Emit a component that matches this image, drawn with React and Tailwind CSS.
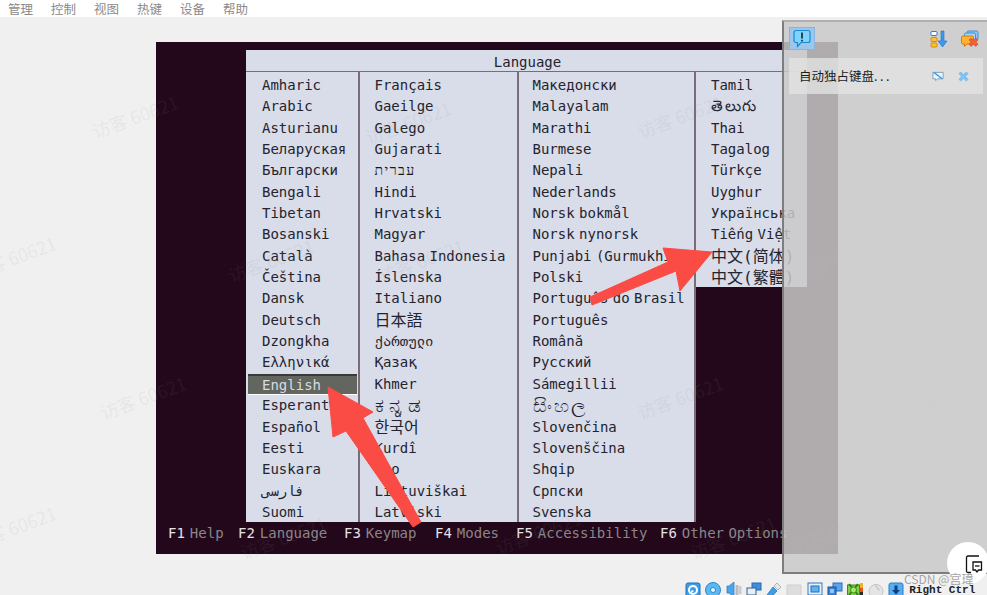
const mono = { fontFamily: '"DejaVu Sans Mono","Noto Sans CJK SC",monospace' };

const c1 = ["Amharic","Arabic","Asturianu","Беларуская","Български","Bengali","Tibetan","Bosanski","Català","Čeština","Dansk","Deutsch","Dzongkha","Ελληνικά","English","Esperanto","Español","Eesti","Euskara","فارسی","Suomi"];
const c2 = ["Français","Gaeilge","Galego","Gujarati","עברית","Hindi","Hrvatski","Magyar","Bahasa Indonesia","Íslenska","Italiano","日本語","ქართული","Қазақ","Khmer","ಕನ್ನಡ","한국어","Kurdî","Lao","Lietuviškai","Latviski"];
const c3 = ["Македонски","Malayalam","Marathi","Burmese","Nepali","Nederlands","Norsk bokmål","Norsk nynorsk","Punjabi (Gurmukhi)","Polski","Português do Brasil","Português","Română","Русский","Sámegillii","සිංහල","Slovenčina","Slovenščina","Shqip","Српски","Svenska"];
const c4 = ["Tamil","తెలుగు","Thai","Tagalog","Türkçe","Uyghur","Українська","Tiếng Việt","中文(简体)","中文(繁體)"];

const rowClass = (s) => {
  if (/[\u4e00-\u9fff\uac00-\ud7af]/.test(s)) return "h-[21.35px] leading-[21.35px] whitespace-nowrap text-[16px]";
  if (s === "ಕನ್ನಡ") return "h-[21.35px] leading-[21.35px] whitespace-nowrap text-[20px] tracking-[5px] overflow-hidden";
  if (s === "తెలుగు") return "h-[21.35px] leading-[21.35px] whitespace-nowrap text-[15px] tracking-[1.500px]";
  if (s === "සිංහල") return "h-[21.35px] leading-[21.35px] whitespace-nowrap text-[19px] tracking-[2px] overflow-hidden";
  if (s === "עברית") return "h-[21.35px] leading-[21.35px] whitespace-nowrap tracking-[1.500px] text-[#16161e]";
  return "h-[21.35px] leading-[21.35px] whitespace-nowrap";
};

function Row({ t, selected, pad }) {
  if (selected) {
    return (
      <div className="h-[21.35px] leading-[18px] bg-[#62665f] text-[#d8dbe3] border-t-2 border-[#3a3a3a] border-b border-b-white ml-[2px] mr-[1px] whitespace-nowrap" style={{ paddingLeft: pad - 2 }}>
        {t}
      </div>
    );
  }
  return <div className={rowClass(t)} style={{ paddingLeft: pad }}>{t}</div>;
}

function Col({ items, w, pad, border, h }) {
  return (
    <div className={border ? "shrink-0 pt-[3px] border-r-2 border-[#7a6c78] overflow-hidden" : "shrink-0 pt-[3px] overflow-hidden"} style={{ width: w, height: h }}>
      {items.map((t) => <Row key={t} t={t} pad={pad} selected={t === "English"} />)}
    </div>
  );
}

const F = ({ k, label, w }) => (
  <div className="shrink-0 whitespace-nowrap" style={{ width: w }}>
    <span className="text-[#e6e2e4]">{k}</span>
    <span className="text-[#8d8489] ml-[5px]">{label}</span>
  </div>
);

const marks = [
  [90, 104], [635, 104], [-32, 245], [226, 248], [98, 385], [635, 385], [-32, 515], [903, 115],
  [793, 245], [903, 385], [363, 110], [493, 520], [238, 525], [688, 525], [376, 248], [788, 520],
];

function BlueBubble() {
  return (
    <svg width="18" height="19" viewBox="0 0 18 19">
      <path d="M3 1.500h12a2 2 0 0 1 2 2v8a2 2 0 0 1-2 2H8l-3.500 4v-4H3a2 2 0 0 1-2-2v-8a2 2 0 0 1 2-2z" fill="#7fd4fb" stroke="#1789d6" strokeWidth="1.200" />
      <rect x="8.200" y="3.500" width="1.600" height="6" fill="#123" />
      <rect x="8.200" y="10.800" width="1.600" height="1.600" fill="#123" />
    </svg>
  );
}

function SortIcon() {
  return (
    <svg width="18" height="18" viewBox="0 0 18 18">
      <rect x="1" y="1.500" width="6" height="4" rx="1" fill="#fff" stroke="#2a7ad0" />
      <rect x="1" y="7.500" width="6" height="4" rx="1" fill="#ffc02e" stroke="#d98a10" />
      <rect x="1" y="13" width="6" height="4" rx="1" fill="#ffc02e" stroke="#d98a10" />
      <path d="M11 1h3v10h3l-4.500 6L8 11h3z" fill="#3a9bf0" stroke="#1c6cc4" strokeWidth=".6" />
    </svg>
  );
}

function CloseAll() {
  return (
    <svg width="18" height="18" viewBox="0 0 18 18">
      <rect x="6" y="1" width="11" height="9" rx="1.500" fill="#8cc8f4" stroke="#3c8ed8" />
      <rect x="3.500" y="3" width="11" height="9" rx="1.500" fill="#a5d6f7" stroke="#3c8ed8" />
      <path d="M2 6h9a1.500 1.500 0 0 1 1.500 1.500v5A1.500 1.500 0 0 1 11 14H6l-2.500 2.500V14H2a1.500 1.500 0 0 1-1.500-1.500v-5A1.500 1.500 0 0 1 2 6z" fill="#ffb52e" stroke="#cf7d10" />
      <path d="M10 8l2.500 2 2.500-2 2 2-2 2 2 2-2 2.500-2.500-2-2.500 2-2-2.500 2-2-2-2z" fill="#f0603a" stroke="#c73e20" strokeWidth=".5" />
    </svg>
  );
}

function Sm({ children }) {
  return <svg width="16" height="16" viewBox="0 0 16 16" className="shrink-0">{children}</svg>;
}

const status = [
  <Sm key="0"><rect x="1" y="1" width="14" height="14" rx="2" fill="#3b9fe8" stroke="#1c6fc0" /><circle cx="8" cy="8" r="4" fill="none" stroke="#fff" strokeWidth="2" /><path d="M4 13l3-5 2 1z" fill="#fff" /></Sm>,
  <Sm key="1"><circle cx="8" cy="8" r="7.500" fill="#5cb8f2" stroke="#2c86d0" /><circle cx="8" cy="8" r="2.500" fill="#e8f6ff" stroke="#2c86d0" /></Sm>,
  <Sm key="2"><path d="M1 4h2l5-4v15l-5-4H1z" fill="#4aa6ea" stroke="#1f76c4" strokeWidth=".7" /><rect x="9.500" y="3" width="3" height="10" fill="#b8bcc0" /><rect x="13" y="4" width="2.500" height="8" fill="#c8ccd0" /></Sm>,
  <Sm key="3"><rect x="6" y="1" width="9" height="7" fill="#3f8fe0" stroke="#2767ad" /><rect x="1" y="6" width="9" height="7" fill="#e6eef6" stroke="#3d5d80" /><rect x="3" y="14" width="5" height="1.500" fill="#556" /></Sm>,
  <Sm key="4"><path d="M1 13l6-8 4 4-6 6.500z" fill="#3b9fe8" stroke="#1c6fc0" strokeWidth=".7" /><path d="M8 4l3-3 4 4-3 3z" fill="#e8e8e8" stroke="#999" strokeWidth=".7" /></Sm>,
  <Sm key="5"><path d="M1 3h9l5 0v12H1z" fill="#dddddd" stroke="#cfcfcf" /></Sm>,
  <Sm key="6"><rect x="1" y="1" width="14" height="12" fill="#e6eef6" stroke="#3578bd" /><rect x="4" y="4" width="8" height="6" fill="#5fb2ee" stroke="#1f6fc0" /><rect x="3" y="14" width="10" height="1.500" fill="#7b8a99" /></Sm>,
  <Sm key="7"><rect x="6" y="1" width="9" height="8" fill="#5aa5ea" stroke="#2a6dbb" /><rect x="1" y="5" width="8" height="10" fill="#3b7fd0" stroke="#234f8f" /><rect x="3" y="7" width="4" height="4" fill="#8cc6f5" /></Sm>,
  <Sm key="8"><rect x="0.500" y="3" width="12" height="11" fill="#7fd04a" stroke="#3e8a1f" /><path d="M2 2l9 11M11 2L2 13" stroke="#2f7a14" strokeWidth="1.800" /><circle cx="6.500" cy="8" r="3" fill="#a8e86a" stroke="#3e8a1f" /><rect x="13" y="1" width="3" height="5" fill="#f2b21f" /><rect x="13" y="6" width="3" height="4" fill="#e0551a" /><rect x="13" y="10" width="3" height="5" fill="#2a2a2a" /></Sm>,
  <Sm key="9"><ellipse cx="8" cy="9" rx="7" ry="6.500" fill="#e4e4e4" stroke="#c4c4c4" /><path d="M8 3l4 5-1 1-4-5z" fill="#c6c6c6" /></Sm>,
  <Sm key="10"><rect x="1" y="1" width="14" height="14" rx="2" fill="#58aef0" stroke="#2c7fcc" /><path d="M6.500 3.500h3v4.500H12l-4 4.500L4 8h2.500z" fill="#0f3f80" /></Sm>,
];

export default function App() {
  return (
    <div className="relative w-[987px] h-[595px] overflow-hidden bg-[#f0f0f0]" style={{ fontFamily: '"Noto Sans CJK SC",sans-serif' }}>
      <div className="h-[17px] bg-white flex pl-[8px] gap-[18px] text-[12.500px] leading-[17px] text-[#8a8a8a]">
        {["管理","控制","视图","热键","设备","帮助"].map((t) => <span key={t}>{t}</span>)}
      </div>

      <div className="mt-[25px] ml-[156px] w-[682px] h-[512px] bg-[#22081a] pt-[8px] pl-[90px] text-[14px] text-[#24242e] [word-spacing:-4px]" style={mono}>
        <div className="w-[561px] h-[22px] bg-[#d9dce9] border-b border-[#7a6c78] text-center leading-[24px] pl-[2px]">Language</div>
        <div className="flex w-[561px] items-start">
          <div className="flex h-[450px] bg-[#d9dce9]">
            <Col items={c1} w={114} pad={16} border h={450} />
            <Col items={c2} w={158.500} pad={14.500} border h={450} />
            <Col items={c3} w={177.500} pad={14} border h={450} />
          </div>
          <div className="bg-[#d9dce9]">
            <Col items={c4} w={111} pad={15} h={215} />
          </div>
        </div>
        <div className="flex h-[21px] leading-[22px] -ml-[78px]">
          <F k="F1" label="Help" w={70} />
          <F k="F2" label="Language" w={106} />
          <F k="F3" label="Keymap" w={91} />
          <F k="F4" label="Modes" w={81} />
          <F k="F5" label="Accessibility" w={144} />
          <F k="F6" label="Other Options" w={140} />
        </div>
      </div>

      <div className="mt-[27px] flex items-start gap-[4.300px] pl-[685px] h-[16px] pt-[1px]">
        {status}
        <span className="ml-[1px] mt-[1px] text-[11px] leading-[14px] text-[#222] whitespace-nowrap font-bold" style={{ fontFamily: '"Liberation Mono",monospace' }}>Right Ctrl</span>
      </div>

      {/* watermarks */}
      <div className="absolute inset-0 pointer-events-none">
        {marks.map(([x, y], i) => (
          <span key={i} className="absolute text-[18px] leading-[24px] text-[#8a8a8a]/10 whitespace-nowrap -rotate-[20deg]" style={{ left: x, top: y }}>访客 60621</span>
        ))}
      </div>

      {/* red arrows */}
      <svg className="absolute inset-0" width="987" height="595" viewBox="0 0 987 595">
        <polygon points="328,387 373,412 363,418 421,522 413,527 346,431 333,437" fill="#fa4b45" stroke="#fa4b45" strokeLinejoin="round" />
        <polygon points="712,252 680,291 676,271 592,305 590,297 668,262 663,248" fill="#fa4b45" stroke="#fa4b45" strokeLinejoin="round" />
      </svg>

      {/* floating panel */}
      <div className="absolute left-[782px] top-[20px] w-[205px] h-[554px] bg-[#c9c9c9]/[0.85] border-l-2 border-t-2 border-b-2 border-l-[#7d7d7d] border-t-[#b0b0b0] border-b-[#7d7d7d] flex flex-col pl-[5px] pt-[5px]">
        <div className="flex items-center h-[23px]">
          <div className="w-[26px] h-[23px] bg-[#9cc6ea] border border-[#86b6e0] flex items-center justify-center"><BlueBubble /></div>
          <div className="ml-auto flex items-center gap-[13px] pr-[8px]"><SortIcon /><CloseAll /></div>
        </div>
        <div className="mt-[8px] w-[194px] h-[36px] bg-[#e2e2e2]/80 flex items-center pl-[10px] pr-[14px] text-[12.500px] text-[#1c1c1c]">
          <span className="whitespace-nowrap">自动独占键盘<span className="tracking-[2.500px]">...</span></span>
          <div className="ml-auto flex items-center gap-[14px]">
            <svg width="12" height="11" viewBox="0 0 13 11"><path d="M1 1h11v7H6L4 10V8H1z" fill="#eef6fc" stroke="#7a9ab5" /><path d="M2 1l9 7" stroke="#3a9be8" strokeWidth="1.500" /></svg>
            <svg width="11" height="11" viewBox="0 0 12 12"><path d="M1 3l2-2 3 3 3-3 2 2-3 3 3 3-2 2-3-3-3 3-2-2 3-3z" fill="#7cc5f5" stroke="#5aaae6" strokeWidth=".6" /></svg>
          </div>
        </div>
      </div>

      {/* floating round button */}
      <div className="absolute left-[947px] top-[542px] w-[42px] h-[42px] rounded-full bg-white flex items-center justify-start pl-[18px] pt-[3px]">
        <svg width="18" height="20" viewBox="0 0 18 20" fill="none" stroke="#111" strokeWidth="1.300" className="shrink-0">
          <path d="M14 1H3a1.500 1.500 0 0 0-1.500 1.500V16a1.500 1.500 0 0 0 1.500 1.500h3" />
          <path d="M8 7h8.500v8h-3l-1.500 2-1.500-2H8z" />
          <path d="M10 11h4.500" />
        </svg>
      </div>

      <span className="absolute left-[904px] top-[571px] text-[12px] leading-[16px] text-[#9a9a9a]/90 whitespace-nowrap">CSDN @宫瑋</span>
    </div>
  );
}
